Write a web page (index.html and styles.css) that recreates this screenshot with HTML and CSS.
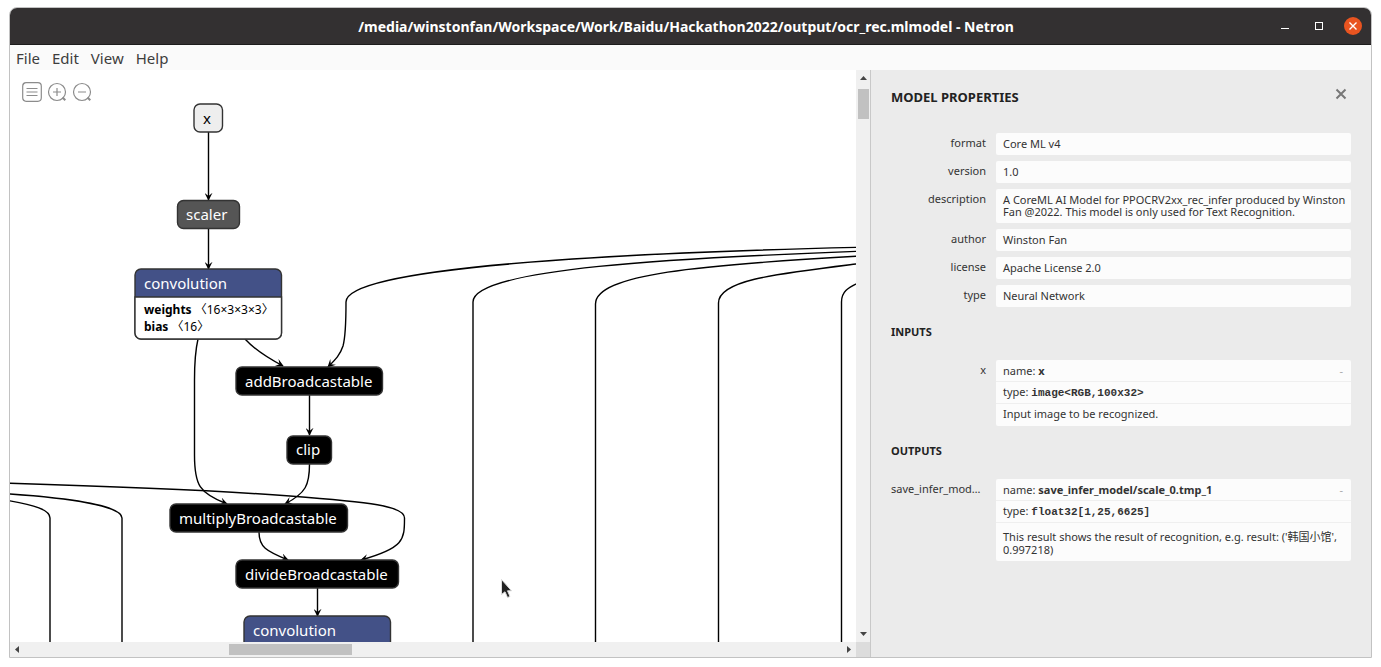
FILE: index.html
```html
<!DOCTYPE html>
<html lang="en">
<head>
<meta charset="utf-8">
<title>ocr_rec.mlmodel - Netron</title>
<link rel="stylesheet" href="styles.css">
</head>
<body>
<div class="window">
  <header class="titlebar">
    <h1 class="titlebar-text">/media/winstonfan/Workspace/Work/Baidu/Hackathon2022/output/ocr_rec.mlmodel - Netron</h1>
    <div class="window-controls">
      <button class="window-button" type="button" aria-label="Minimize"><svg width="18" height="18" viewBox="0 0 18 18"><path d="M5 11.5h8" stroke="#fff"/></svg></button>
      <button class="window-button" type="button" aria-label="Maximize"><svg width="18" height="18" viewBox="0 0 18 18"><rect x="5.500" y="5.500" width="7" height="7" fill="none" stroke="#fff"/></svg></button>
      <button class="window-button window-close" type="button" aria-label="Close"><svg width="18" height="18" viewBox="0 0 18 18"><path d="M5.500 5.500l7 7m0-7l-7 7" stroke="#fff" stroke-width="1.400"/></svg></button>
    </div>
  </header>
  <nav class="menubar">
    <button class="menu-item" type="button">File</button>
    <button class="menu-item" type="button">Edit</button>
    <button class="menu-item" type="button">View</button>
    <button class="menu-item" type="button">Help</button>
  </nav>
  <main class="content">
    <section class="graph">
      <div class="canvas">
        <svg class="diagram" width="846" height="572" viewBox="10 70 846 572">
          <defs>
            <marker id="arrow" viewBox="0 0 10 10" refX="9" refY="5" markerWidth="8" markerHeight="8" markerUnits="userSpaceOnUse" orient="auto"><path d="M0 0L10 5L0 10L4 5z"/></marker>
          </defs>
          <g class="edge">
            <path class="directed" d="M208.500 132V200"/>
            <path class="directed" d="M208.500 229V269"/>
            <path class="directed" d="M198 339C195 352 194.500 365 194.500 380V455C194.500 485 199 493 227 504"/>
            <path class="directed" d="M245 339C255 350 266 357 283 366"/>
            <path class="directed" d="M860 247.300C620 253 346 267 346 302C346 320 346 335 343 346C340 355 336 359 328 367"/>
            <path class="directed" d="M309.500 395V435"/>
            <path class="directed" d="M309.500 464C309.500 485 306 493 285 504"/>
            <path class="directed" d="M6 483.200C100 486 210 490 290 496C370 502 404.500 506 404.500 518C404.500 540 404 548 361 560"/>
            <path class="directed" d="M259 532C259 547 266 551 288 560"/>
            <path class="directed" d="M317.500 588V616"/>
            <path d="M473 645V302C473 268 680 258 860 251.200"/>
            <path d="M595.500 645V304C595.500 274 700 265 860 256"/>
            <path d="M718.500 645V303C718.500 280 775 274 860 263.500"/>
            <path d="M841.500 645V302C841.500 292 847 288 860 282"/>
            <path d="M6 493.700C70 498 122 506 122 518V645"/>
            <path d="M6 500.200C35 505 50 510 50 518V645"/>
          </g>
          <g class="node node-input"><rect x="194" y="104" width="28.500" height="28" rx="6"/><text x="203" y="124">x</text></g>
          <g class="node node-scaler"><rect x="177.500" y="200.500" width="62" height="28" rx="6"/><text x="186" y="220">scaler</text></g>
          <g class="node node-layer">
            <rect x="135" y="269" width="146.500" height="70" rx="6"/>
            <path class="node-body" d="M135 297H281.500V333A6 6 0 0 1 275.500 339H141A6 6 0 0 1 135 333z"/>
            <text x="144" y="289">convolution</text>
            <text class="attribute" x="144" y="314"><tspan class="attribute-name">weights</tspan> 〈16×3×3×3〉</text>
            <text class="attribute" x="144" y="331"><tspan class="attribute-name">bias</tspan> 〈16〉</text>
          </g>
          <g class="node"><rect x="236" y="367" width="146.500" height="28" rx="6"/><text x="245" y="387">addBroadcastable</text></g>
          <g class="node"><rect x="287" y="436" width="44.500" height="28" rx="6"/><text x="296" y="455">clip</text></g>
          <g class="node"><rect x="170" y="504" width="177.500" height="28" rx="6"/><text x="179" y="524">multiplyBroadcastable</text></g>
          <g class="node"><rect x="236" y="560" width="162.500" height="28" rx="6"/><text x="245" y="580">divideBroadcastable</text></g>
          <g class="node node-layer"><rect x="244" y="616" width="146.500" height="70" rx="6"/><text x="253" y="636">convolution</text></g>
          <path class="pointer" d="M501.500 579.500V594.500L505 591.800L507.500 597.500L510 596.500L507.500 590.800H511.500z"/>
        </svg>
        <div class="toolbar">
          <button class="tool" type="button" aria-label="Model properties"><svg width="20" height="20" viewBox="0 0 20 20"><rect x="0.700" y="0.700" width="18.600" height="18.600" rx="3.500"/><path d="M4.500 6.500h11M4.500 10h11M4.500 13.500h11"/></svg></button>
          <button class="tool" type="button" aria-label="Zoom in"><svg width="20" height="20" viewBox="0 0 20 20"><circle cx="10" cy="10" r="8.500"/><path d="M6 10h8M10 6v8"/><path class="tool-handle" d="M15.500 15.500l2.800 2.800"/></svg></button>
          <button class="tool" type="button" aria-label="Zoom out"><svg width="20" height="20" viewBox="0 0 20 20"><circle cx="10" cy="10" r="8.500"/><path d="M6 10h8"/><path class="tool-handle" d="M15.500 15.500l2.800 2.800"/></svg></button>
        </div>
      </div>
      <div class="scroll-y"><svg width="14" height="19" viewBox="0 0 14 19"><path d="M4 10h7L7.500 6z"/></svg><div class="thumb-y"></div><svg class="scroll-end" width="14" height="14" viewBox="0 0 14 14"><path d="M4 4h7L7.500 8z"/></svg></div>
      <div class="scroll-x"><svg width="14" height="15" viewBox="0 0 14 15"><path d="M9 4v7L5 7.500z"/></svg><div class="thumb-x"></div><svg class="scroll-end" width="14" height="15" viewBox="0 0 14 15"><path d="M5 4v7L9 7.500z"/></svg></div>
      <div class="scroll-corner"></div>
    </section>
    <aside class="sidebar">
      <div class="sidebar-header">
        <h2 class="sidebar-title">MODEL PROPERTIES</h2>
        <button class="sidebar-close" type="button" aria-label="Close sidebar"><svg width="12" height="12" viewBox="0 0 12 12"><path d="M1.500 1.500l9 9m0-9l-9 9"/></svg></button>
      </div>
      <dl class="properties">
        <dt>format</dt><dd><p>Core ML v4</p></dd>
        <dt>version</dt><dd><p>1.0</p></dd>
        <dt>description</dt><dd><p>A CoreML AI Model for PPOCRV2xx_rec_infer produced by Winston Fan @2022. This model is only used for Text Recognition.</p></dd>
        <dt>author</dt><dd><p>Winston Fan</p></dd>
        <dt>license</dt><dd><p>Apache License 2.0</p></dd>
        <dt>type</dt><dd><p>Neural Network</p></dd>
      </dl>
      <h3 class="group-title">INPUTS</h3>
      <dl class="properties">
        <dt>x</dt>
        <dd><p class="expandable"><span>name: <b>x</b></span><button class="toggle" type="button">-</button></p><p>type: <code>image&lt;RGB,100x32&gt;</code></p><p>Input image to be recognized.</p></dd>
      </dl>
      <h3 class="group-title">OUTPUTS</h3>
      <dl class="properties">
        <dt class="clipped" title="save_infer_model/scale_0.tmp_1">save_infer_mod…</dt>
        <dd><p class="expandable"><span>name: <b>save_infer_model/scale_0.tmp_1</b></span><button class="toggle" type="button">-</button></p><p>type: <code>float32[1,25,6625]</code></p><p class="long-text">This result shows the result of recognition, e.g. result: ('韩国小馆', 0.997218)</p></dd>
      </dl>
    </aside>
  </main>
</div>
</body>
</html>
```
FILE: styles.css
```css
* { box-sizing: border-box; }
body {
  margin: 0;
  padding: 7px 9px 9px;
  height: 100vh;
  background: #fff;
  color: #333;
  font-family: "Noto Sans", "Noto Sans CJK SC", sans-serif;
}
h1, h2, h3, p, dl, dd { margin: 0; }
button { padding: 0; border: 0; background: none; font: inherit; color: inherit; }
svg { display: block; }

.window {
  display: flex;
  flex-direction: column;
  height: 100%;
  border: 1px solid #c2c2c2;
  border-radius: 8px 8px 0 0;
  overflow: hidden;
}
.titlebar {
  display: grid;
  grid-template-columns: 1fr auto 1fr;
  align-items: center;
  height: 37px;
  padding-right: 9px;
  border-bottom: 1px solid #1d1c1c;
  background: #333031;
  color: #fff;
}
.titlebar-text { grid-column: 2; font-size: 14px; font-weight: 700; white-space: nowrap; }
.window-controls { display: flex; gap: 16px; justify-content: flex-end; }
.window-button { width: 18px; height: 18px; border-radius: 50%; }
.window-close { background: #e95420; }
.menubar {
  display: flex;
  gap: 12px;
  height: 25px;
  padding: 0 6px;
  background: #fafafa;
  color: #3d3d3d;
  font-size: 15px;
}
.content { display: flex; flex: 1; min-height: 0; }
.graph {
  display: grid;
  flex: 1;
  grid-template-columns: minmax(0, 1fr) 14px;
  grid-template-rows: minmax(0, 1fr) 15px;
  min-width: 0;
}
.canvas { position: relative; overflow: hidden; background: #fff; }
.diagram { overflow: visible; }
.edge { fill: none; stroke: #000; stroke-width: 1.400; }
.directed { marker-end: url(#arrow); }
.node { fill: #000; stroke: #333; stroke-width: 1.400; }
.node text { fill: #fff; stroke: none; font-size: 15px; }
.node-input { fill: #eee; }
.node-input text { fill: #000; }
.node-scaler { fill: #555; }
.node-layer { fill: #435187; }
.node-body { fill: #fff; }
.node .attribute { fill: #000; font-size: 12px; }
.attribute-name { font-weight: 700; }
.pointer { fill: #222; stroke: #ddd; stroke-width: 1; }
.toolbar { position: absolute; left: 12px; top: 12px; display: flex; gap: 5px; }
.tool { width: 20px; height: 20px; }
.tool svg { fill: none; stroke: #8c8c8c; stroke-width: 1.200; }
.tool .tool-handle { stroke-width: 2; }

.scroll-y, .scroll-x { display: flex; background: #f0f0f0; fill: #444; }
.scroll-y { flex-direction: column; }
.scroll-end { margin-top: auto; }
.scroll-x .scroll-end { margin: 0 0 0 auto; }
.thumb-y { width: 11px; height: 30px; margin-left: 2px; background: #c1c1c1; }
.thumb-x { width: 123px; height: 11px; margin: 2px 0 0 205px; background: #c1c1c1; }
.scroll-corner { background: #dcdcdc; }

.sidebar {
  width: 501px;
  padding: 20px;
  border-left: 1px solid #c8c8c8;
  background: #ebebeb;
  font-size: 11px;
  line-height: 12px;
}
.sidebar-header { display: flex; align-items: flex-start; justify-content: space-between; height: 43px; }
.sidebar-title { font-size: 13px; line-height: 14px; font-weight: 700; color: #222; }
.sidebar-close { padding: 0 4px; margin-top: -2px; }
.sidebar-close svg { fill: none; stroke: #777; stroke-width: 2; }
.properties { display: grid; grid-template-columns: 95px minmax(0, 1fr); gap: 6px 10px; }
.properties dt { padding-top: 4px; text-align: right; white-space: nowrap; }
.properties .clipped { text-align: left; }
.properties dd { border-radius: 2px; background: #fcfcfc; }
.properties dd p { padding: 5px 3px 5px 7px; }
.properties dd p:first-child:not(:last-child) { padding-bottom: 4px; }
.properties dd p + p { padding: 4px 3px 4px 7px; border-top: 1px solid #efefef; }
.properties dd p + p:last-child { padding-bottom: 6px; }
.expandable { display: flex; justify-content: space-between; }
.toggle { margin-right: 5px; color: #aaa; }
.group-title { margin: 18px 0 21px; font-size: 11px; line-height: 14px; font-weight: 700; color: #222; }
code { font: 700 11px/12px "Liberation Mono", monospace; }
.properties dd p.long-text:last-child { padding-top: 7px; padding-bottom: 5px; line-height: 13px; }
```
